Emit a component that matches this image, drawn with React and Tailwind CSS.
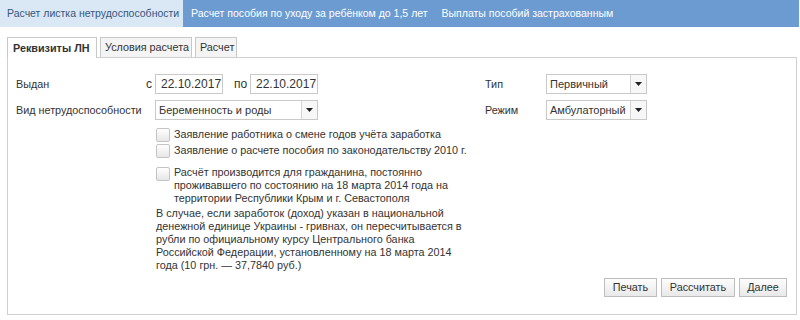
import React from "react";

function Select({ value, width }) {
  return (
    <div className={`flex h-[20px] border border-[#c9c9c9] bg-white ${width}`}>
      <div className="flex-1 whitespace-nowrap pl-[3px] text-[11px] leading-[18px] text-[#333]">{value}</div>
      <div className="flex w-[16px] items-center justify-center border-l border-[#d4d4d4] bg-[#f7f7f7]">
        <svg width="7" height="4" viewBox="0 0 7 4">
          <path d="M0 0h7L3.5 4z" fill="#222" />
        </svg>
      </div>
    </div>
  );
}

function DateInput({ value }) {
  return (
    <div className="h-[20px] w-[68px] border border-[#c9c9c9] bg-white pl-[5px] text-[12px] leading-[18px] text-[#333]">
      {value}
    </div>
  );
}

function Checkbox() {
  return (
    <div className="mt-[1px] h-[14px] w-[14px] shrink-0 rounded-[2px] border border-[#c4c4c4] bg-gradient-to-b from-[#ffffff] to-[#e6e6e6]" />
  );
}

function Button({ children, width }) {
  return (
    <div className={`flex h-[19px] items-center justify-center whitespace-nowrap border border-[#bdbdbd] bg-gradient-to-b from-[#fdfdfd] to-[#e9e9e9] text-[#333] ${width}`}>
      {children}
    </div>
  );
}

export default function App() {
  return (
    <div
      className="h-[320px] w-[800px] overflow-hidden whitespace-nowrap bg-white text-[10.8px] text-[#333]"
      style={{ fontFamily: '"Liberation Sans", Arial, sans-serif' }}
    >
      {/* top tabs */}
      <div className="mr-[1px] flex h-[27px] bg-[#6b9bd1] text-[10.5px] leading-[27px] text-white">
        <div className="w-[183px] bg-[#dae7f5] px-[7px] text-[#35577e]">Расчет листка нетрудоспособности</div>
        <div className="px-[8px]">Расчет пособия по уходу за ребёнком до 1,5 лет</div>
        <div className="px-[6px]">Выплаты пособий застрахованным</div>
      </div>

      {/* inner tabs */}
      <div className="mx-[7px] mr-[3px] mt-[11px] flex h-[20px] items-end border-b border-[#d0d0d0]">
        <div className="-mb-[1px] flex h-[21px] w-[90px] items-center border border-b-0 border-[#c8c8c8] bg-white pl-[5px] font-bold text-[#333]">
          Реквизиты ЛН
        </div>
        <div className="ml-[3px] flex h-[20px] w-[92px] items-center border border-b-0 border-[#c8c8c8] bg-[#f4f4f4] pl-[4px]">
          Условия расчета
        </div>
        <div className="ml-[3px] flex h-[20px] w-[42px] items-center border border-b-0 border-[#c8c8c8] bg-[#f4f4f4] pl-[4px]">
          Расчет
        </div>
      </div>

      {/* panel */}
      <div className="mx-[7px] mr-[3px] h-[257px] border border-t-0 border-[#d0d0d0] pl-[8px] pr-[9px] pt-[16px]">
        <div className="flex h-[20px] items-center">
          <div className="flex w-[469px] items-center">
            <div className="w-[130px]">Выдан</div>
            <div className="w-[9px] text-[12px]">с</div>
            <DateInput value="22.10.2017" />
            <div className="ml-[11px] w-[16px] text-[12px]">по</div>
            <DateInput value="22.10.2017" />
          </div>
          <div className="w-[61px]">Тип</div>
          <Select value="Первичный" width="w-[101px]" />
        </div>

        <div className="mt-[6px] flex h-[20px] items-center">
          <div className="flex w-[469px] items-center">
            <div className="w-[139px]">Вид нетрудоспособности</div>
            <Select value="Беременность и роды" width="w-[163px]" />
          </div>
          <div className="w-[61px]">Режим</div>
          <Select value="Амбулаторный" width="w-[101px]" />
        </div>

        <div className="ml-[140px] mt-[7px] leading-[13px]">
          <div className="flex gap-[4px]">
            <Checkbox />
            <div className="leading-[15px]">Заявление работника о смене годов учёта заработка</div>
          </div>
          <div className="mt-[1px] flex gap-[4px]">
            <Checkbox />
            <div className="leading-[15px]">Заявление о расчете пособия по законодательству 2010 г.</div>
          </div>
          <div className="mt-[8px] flex gap-[4px]">
            <Checkbox />
            <div>
              Расчёт производится для гражданина, постоянно
              <br />
              проживавшего по состоянию на 18 марта 2014 года на
              <br />
              территории Республики Крым и г. Севастополя
            </div>
          </div>
          <div className="mt-[2px]">
            В случае, если заработок (доход) указан в национальной
            <br />
            денежной единице Украины - гривнах, он пересчитывается в
            <br />
            рубли по официальному курсу Центрального банка
            <br />
            Российской Федерации, установленному на 18 марта 2014
            <br />
            года (10 грн. — 37,7840 руб.)
          </div>
        </div>

        <div className="mt-[6px] flex justify-end gap-[4px]">
          <Button width="w-[53px]">Печать</Button>
          <Button width="w-[74px]">Рассчитать</Button>
          <Button width="w-[48px]">Далее</Button>
        </div>
      </div>
    </div>
  );
}
